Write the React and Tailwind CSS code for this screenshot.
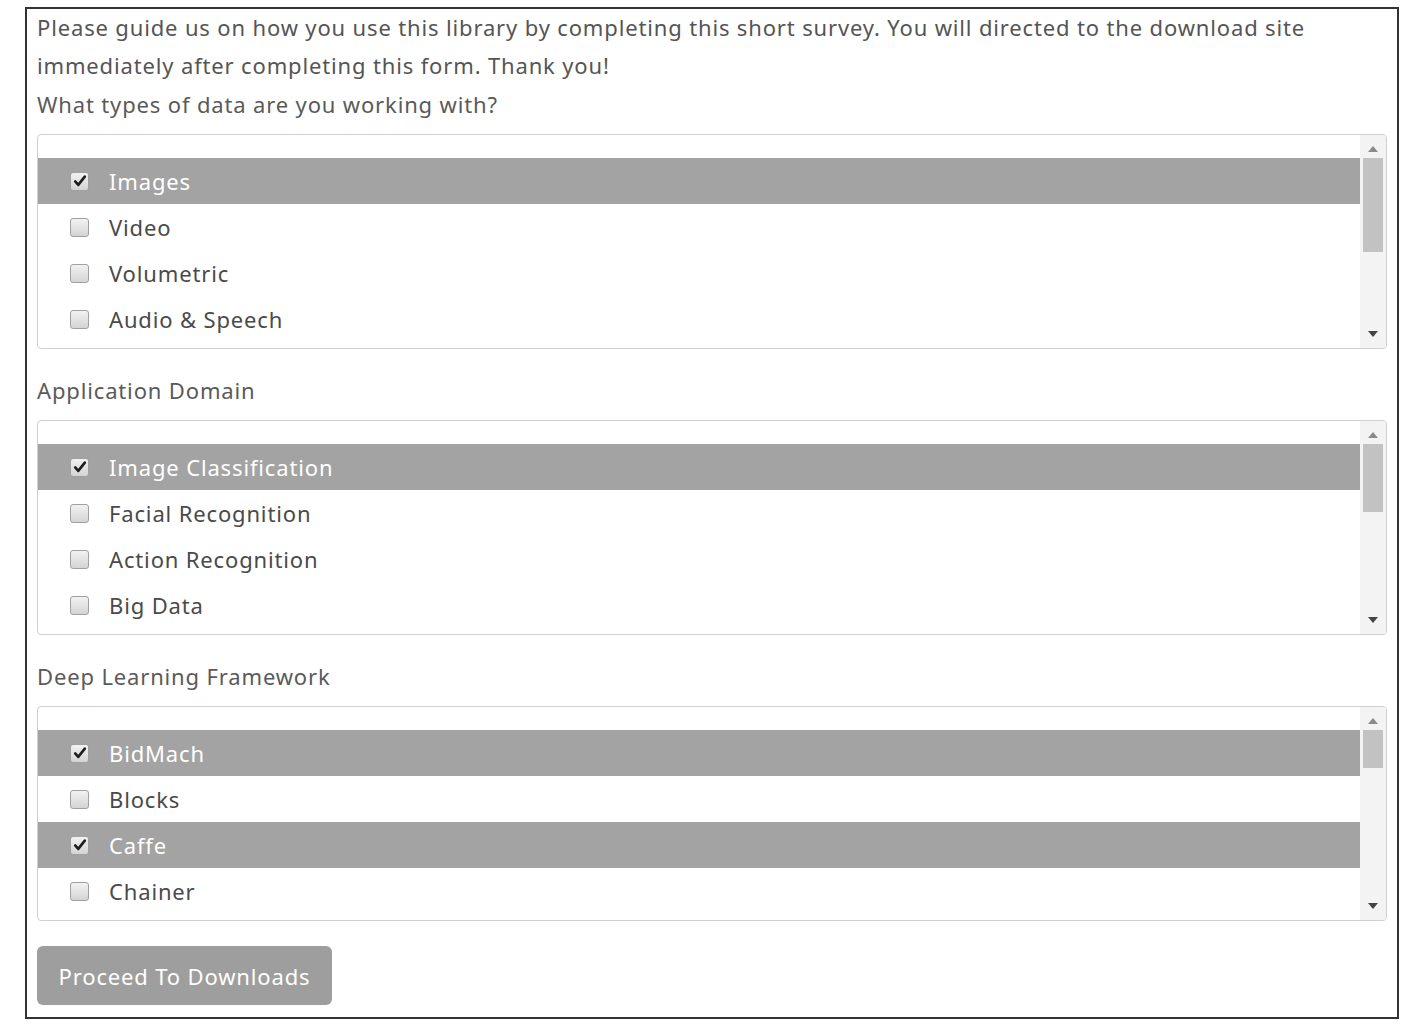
import React from "react";

const sections = [
  {
    label: "What types of data are you working with?",
    items: [
      { name: "Images", checked: true },
      { name: "Video" },
      { name: "Volumetric" },
      { name: "Audio & Speech" },
    ],
    thumb: "h-[94px]",
  },
  {
    label: "Application Domain",
    items: [
      { name: "Image Classification", checked: true },
      { name: "Facial Recognition" },
      { name: "Action Recognition" },
      { name: "Big Data" },
    ],
    thumb: "h-[68px]",
  },
  {
    label: "Deep Learning Framework",
    items: [
      { name: "BidMach", checked: true },
      { name: "Blocks" },
      { name: "Caffe", checked: true },
      { name: "Chainer" },
    ],
    thumb: "h-[38px]",
  },
];

function Checkbox({ checked }) {
  return (
    <span className="w-[19px] h-[19px] rounded-[3px] border border-[#a0a0a0] bg-gradient-to-b from-[#f2f2f2] to-[#d4d4d4] flex items-center justify-center flex-shrink-0">
      {checked && (
        <svg viewBox="0 0 16 16" className="w-[14px] h-[14px]">
          <path d="M2.5 8.5 L6 12.5 L13.5 3" fill="none" stroke="#1e1e1e" strokeWidth="3" strokeLinecap="round" strokeLinejoin="round" />
        </svg>
      )}
    </span>
  );
}

function ListBox({ items, thumb }) {
  return (
    <div className="flex h-[215px] border border-[#cfcfcf] rounded-[4px] bg-white overflow-hidden">
      <div className="flex-1 pt-[23px]">
        {items.map((it) => (
          <div
            key={it.name}
            className={
              "h-[46px] flex items-center pl-[32px] gap-[20px] " +
              (it.checked ? "bg-[#a3a3a3] text-white" : "text-[#4a4a4a]")
            }
          >
            <Checkbox checked={it.checked} />
            <span>{it.name}</span>
          </div>
        ))}
      </div>
      <div className="w-[26px] bg-[#f3f3f3] flex flex-col items-center">
        <svg viewBox="0 0 10 6" className="w-[10px] h-[6px] mt-[11px] mb-[6px]">
          <path d="M0 6 L5 0 L10 6 Z" fill="#8a8a8a" />
        </svg>
        <div className={"w-[20px] bg-[#c2c2c2] " + thumb}></div>
        <div className="flex-1"></div>
        <svg viewBox="0 0 10 6" className="w-[10px] h-[6px] mb-[11px]">
          <path d="M0 0 L10 0 L5 6 Z" fill="#444" />
        </svg>
      </div>
    </div>
  );
}

export default function App() {
  return (
    <div className="w-[1425px] h-[1026px] bg-white pt-[7px] pl-[25px]" style={{ fontFamily: '"Noto Sans", sans-serif' }}>
      <div className="w-[1374px] h-[1012px] border-2 border-[#333] px-[10px] text-[22px] tracking-[0.85px] leading-[38px] text-[#555]">
        <p className="-mt-[1px] mb-[1px]">
          Please guide us on how you use this library by completing this short survey. You will directed to the download site
          <br />
          immediately after completing this form. Thank you!
        </p>
        {sections.map((s, i) => (
          <div key={s.label} className={i === 0 ? "" : "mt-[22px]"}>
            <div className="mb-[11px] text-[#5a5a5a]">{s.label}</div>
            <ListBox items={s.items} thumb={s.thumb} />
          </div>
        ))}
        <button className="mt-[25px] w-[295px] h-[59px] rounded-[6px] bg-[#9e9e9e] text-white text-[22px] tracking-[0.85px]">
          Proceed To Downloads
        </button>
      </div>
    </div>
  );
}
